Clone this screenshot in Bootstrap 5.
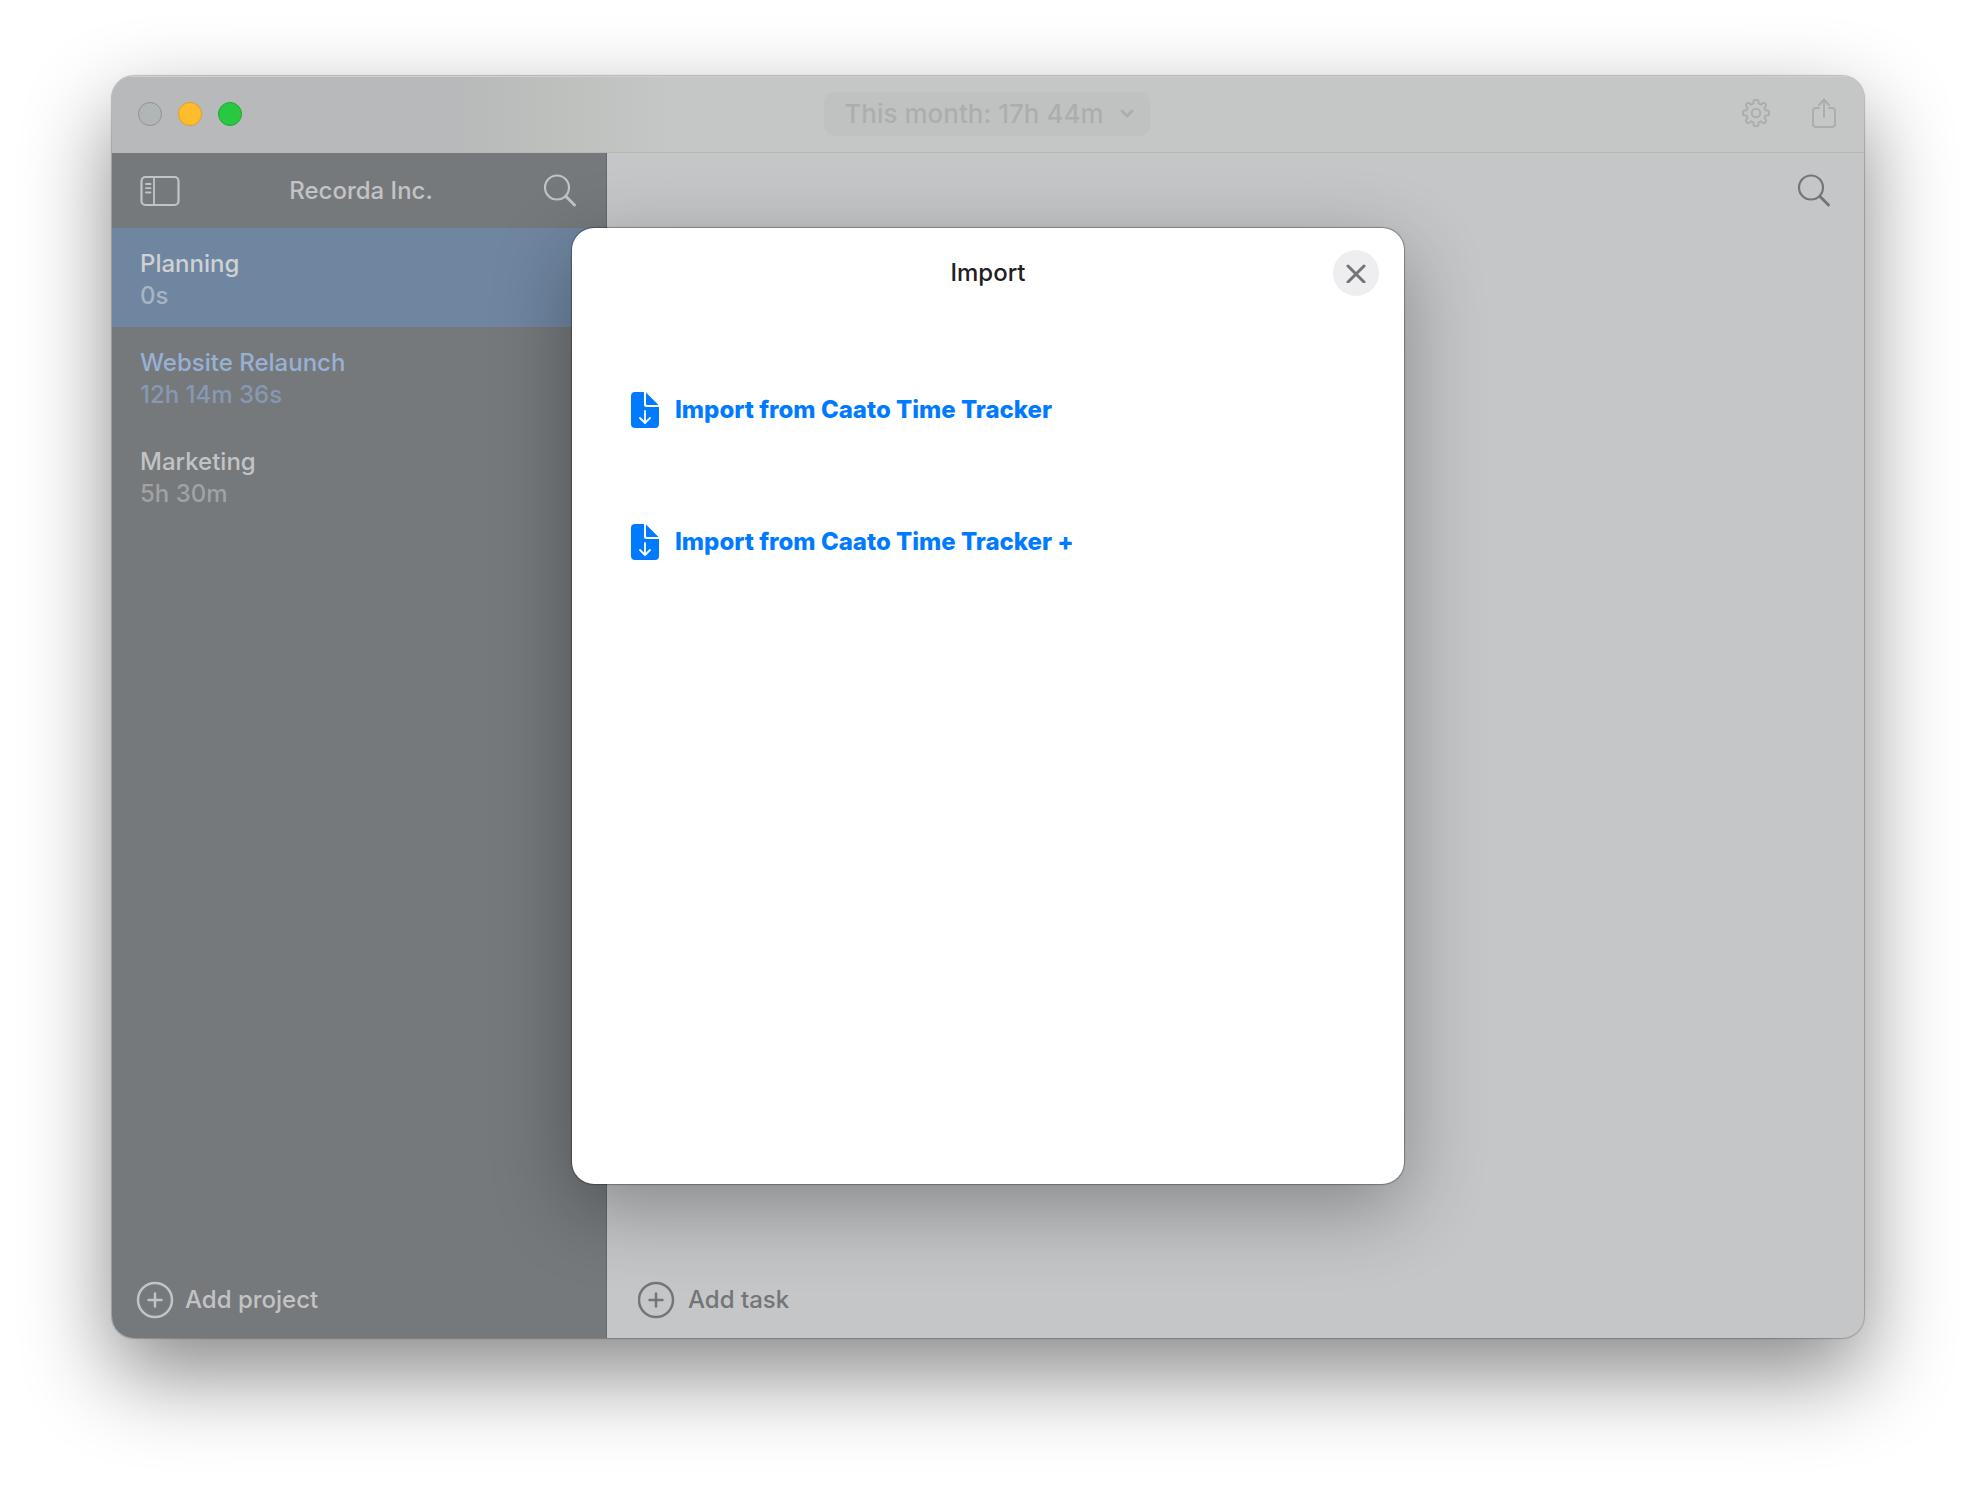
<!DOCTYPE html>
<html lang="en">
<head>
<meta charset="utf-8">
<meta name="viewport" content="width=device-width, initial-scale=1">
<title>Import</title>
<link href="https://cdn.jsdelivr.net/npm/bootstrap@5.3.0/dist/css/bootstrap.min.css" rel="stylesheet">
<style>
body{font-family:Inter,"Liberation Sans",sans-serif;font-size:24px;line-height:32px;font-weight:500;background:#fff;padding:76px 112px 148px}
button{color:inherit;font:inherit}
svg{display:block;fill:none;stroke:currentColor;stroke-linecap:round;stroke-linejoin:round;flex:none}
.app-window{border-radius:22px;background:#c5c6c8;box-shadow:0 0 1px 1px rgba(0,0,0,.22),0 36px 88px rgba(0,0,0,.47)}
.app-frame{border-radius:22px;overflow:hidden}
.title-bar{height:77px;background:linear-gradient(90deg,#b7b9ba 340px,#bdbfbd 430px,#c5c7c6 560px);border-bottom:1px solid #b5b8b6;box-shadow:inset 0 1px #cfd1d0;color:#acaead;padding:0 28px 0 26px}
.side-zone{flex:1 1 0}
.icon-btn{background:transparent;border:0;padding:0}
.traffic{width:24px;height:24px;border-radius:50%;border:1px solid #909495;background:#b0b5b6}
.traffic-min{background:#ffbd2e;border-color:#e0a020}
.traffic-max{background:#28c840;border-color:#1fa833}
.month-btn{background:#c0c2c1;border-radius:10px;height:44px;padding:0 16px 0 20px;font-size:26px}
.tool-icons{gap:42px;padding-bottom:3px}
.sidebar{width:495px;background:#75797c;color:#c2c3c5;border-right:1px solid #64686a}
.pane-head{height:75px}
.project{height:99px;padding:4px 28px 0;color:#c2c3c5;text-decoration:none}
.project-time{color:#a0a2a4}
.is-active{background:#6f86a1;color:#d0d1d3}
.is-active .project-time{color:#a9b4c2}
.is-running,.is-running .project-name{color:#98b0d4}
.is-running .project-time{color:#8798b2}
.add-bar{height:76px;padding:0 23px}
.add-btn{gap:10px}
.main-pane{color:#737577}
.sheet-layer{padding:152px 32px 154px;pointer-events:none}
.sheet{width:832px;background:#fff;border-radius:22px;color:#1f2022;pointer-events:auto;box-shadow:0 0 1px 1px rgba(0,0,0,.3),0 24px 80px rgba(0,0,0,.32)}
.sheet-head{height:89px;padding:0 25px}
.close-btn{width:46px;height:46px;border-radius:50%;background:#eeeef0;color:#747476}
.import-list{padding:69px 58px;gap:84px}
.import-link{color:#007aff;font-weight:800;height:48px}
</style>
</head>
<body class="min-vh-100 d-flex flex-column">
<div class="app-window position-relative flex-grow-1 d-flex flex-column">
  <div class="app-frame flex-grow-1 d-flex flex-column">
    <header class="title-bar d-flex align-items-center">
      <div class="side-zone d-flex gap-3">
        <button class="traffic p-0" aria-label="Close window"></button>
        <button class="traffic traffic-min p-0" aria-label="Minimize window"></button>
        <button class="traffic traffic-max p-0" aria-label="Zoom window"></button>
      </div>
      <button class="month-btn border-0 d-flex align-items-center gap-3">This month: 17h 44m
        <svg width="14" height="10" viewBox="0 0 14 10" stroke-width="3"><path d="M2 2l5 5 5-5"/></svg>
      </button>
      <div class="side-zone tool-icons d-flex justify-content-end align-items-center">
        <button class="icon-btn" aria-label="Settings">
          <svg width="28" height="28" viewBox="0 0 28 28" stroke-width="2"><circle cx="14" cy="14" r="4.300"/><path d="M11.500 4.500V2.500Q11.500 1 13 1H15Q16.500 1 16.500 2.500V4.500Q18 5 19 5.700L20.600 4.300Q21.700 3.300 22.700 4.300L23.700 5.300Q24.700 6.300 23.700 7.400L22.300 9Q23 10 23.500 11.500H25.500Q27 11.500 27 13V15Q27 16.500 25.500 16.500H23.500Q23 18 22.300 19L23.700 20.600Q24.700 21.700 23.700 22.700L22.700 23.700Q21.700 24.700 20.600 23.700L19 22.300Q18 23 16.500 23.500V25.500Q16.500 27 15 27H13Q11.500 27 11.500 25.500V23.500Q10 23 9 22.300L7.400 23.700Q6.300 24.700 5.300 23.700L4.300 22.700Q3.300 21.700 4.300 20.600L5.700 19Q5 18 4.500 16.500H2.500Q1 16.500 1 15V13Q1 11.500 2.500 11.500H4.500Q5 10 5.700 9L4.300 7.400Q3.300 6.300 4.300 5.300L5.300 4.300Q6.300 3.300 7.400 4.300L9 5.700Q10 5 11.500 4.500Z"/></svg>
        </button>
        <button class="icon-btn" aria-label="Share">
          <svg width="24" height="30" viewBox="0 0 24 30" stroke-width="2"><path d="M7 10H4a3 3 0 0 0-3 3v13a3 3 0 0 0 3 3h16a3 3 0 0 0 3-3V13a3 3 0 0 0-3-3h-3M12 19V2M7 7l5-5.500 5 5.500"/></svg>
        </button>
      </div>
    </header>
    <div class="d-flex flex-grow-1">
      <aside class="sidebar d-flex flex-column flex-shrink-0">
        <div class="pane-head d-flex align-items-center justify-content-between px-4">
          <button class="icon-btn ms-1" aria-label="Toggle sidebar">
            <svg width="40" height="32" viewBox="0 0 40 32" stroke-width="2.200"><rect x="1.500" y="2" width="37" height="28" rx="4"/><path d="M14 2v28M6 9h4.500M6 13.200h4.500M6 17.500h4.500" stroke-width="1.800"/></svg>
          </button>
          <span>Recorda Inc.</span>
          <button class="icon-btn me-1" aria-label="Search projects">
            <svg width="36" height="36" viewBox="0 0 36 36" stroke-width="2.200"><circle cx="15" cy="14.500" r="12"/><path d="M24 23.500l8.500 8.500" stroke-width="3"/></svg>
          </button>
        </div>
        <nav class="flex-grow-1">
          <a href="#" class="project is-active d-flex flex-column justify-content-center"><span class="project-name">Planning</span><span class="project-time">0s</span></a>
          <a href="#" class="project is-running d-flex flex-column justify-content-center"><span class="project-name">Website Relaunch</span><span class="project-time">12h 14m 36s</span></a>
          <a href="#" class="project d-flex flex-column justify-content-center"><span class="project-name">Marketing</span><span class="project-time">5h 30m</span></a>
        </nav>
        <div class="add-bar d-flex align-items-center">
          <button class="icon-btn add-btn d-flex align-items-center">
            <svg width="40" height="40" viewBox="0 0 40 40" stroke-width="2.500"><circle cx="20" cy="20" r="17"/><path d="M13.500 20h13M20 13.500v13"/></svg>Add project
          </button>
        </div>
      </aside>
      <main class="main-pane flex-grow-1 d-flex flex-column">
        <div class="pane-head d-flex align-items-center justify-content-end px-4">
          <button class="icon-btn me-2" aria-label="Search tasks">
            <svg width="36" height="36" viewBox="0 0 36 36" stroke-width="2.200"><circle cx="15" cy="14.500" r="12"/><path d="M24 23.500l8.500 8.500" stroke-width="3"/></svg>
          </button>
        </div>
        <div class="add-bar d-flex align-items-center mt-auto ms-2">
          <button class="icon-btn add-btn d-flex align-items-center">
            <svg width="40" height="40" viewBox="0 0 40 40" stroke-width="2.500"><circle cx="18" cy="20" r="17"/><path d="M11.500 20h13M18 13.500v13"/></svg>Add task
          </button>
        </div>
      </main>
    </div>
  </div>
  <div class="sheet-layer position-absolute top-0 start-0 w-100 h-100 d-flex justify-content-center">
    <section class="sheet" role="dialog" aria-labelledby="sheet-title">
      <div class="sheet-head d-flex align-items-center">
        <div class="side-zone"></div>
        <span id="sheet-title">Import</span>
        <div class="side-zone d-flex justify-content-end">
          <button class="close-btn border-0 p-0 d-flex align-items-center justify-content-center" aria-label="Close">
            <svg width="20" height="20" viewBox="0 0 20 20" stroke-width="3"><path d="M2 3l16 16M18 3L2 19"/></svg>
          </button>
        </div>
      </div>
      <div class="import-list d-flex flex-column align-items-start">
        <button class="import-link bg-transparent border-0 p-0 d-flex align-items-center gap-3">
          <svg width="29" height="36" viewBox="0 0 29 36"><path fill="currentColor" stroke="none" d="M5 0H14V12.500a2.500 2.500 0 0 0 2.500 2.500H29V32a4 4 0 0 1-4 4H5a4 4 0 0 1-4-4V4a4 4 0 0 1 4-4ZM16 0.500L28.500 13H17a1 1 0 0 1-1-1Z"/><path stroke="#fff" stroke-width="1.800" d="M15 19v11.500M10 26l5 5 5-5"/></svg>Import from Caato Time Tracker
        </button>
        <button class="import-link bg-transparent border-0 p-0 d-flex align-items-center gap-3">
          <svg width="29" height="36" viewBox="0 0 29 36"><path fill="currentColor" stroke="none" d="M5 0H14V12.500a2.500 2.500 0 0 0 2.500 2.500H29V32a4 4 0 0 1-4 4H5a4 4 0 0 1-4-4V4a4 4 0 0 1 4-4ZM16 0.500L28.500 13H17a1 1 0 0 1-1-1Z"/><path stroke="#fff" stroke-width="1.800" d="M15 19v11.500M10 26l5 5 5-5"/></svg>Import from Caato Time Tracker +
        </button>
      </div>
    </section>
  </div>
</div>
<script src="https://cdn.jsdelivr.net/npm/bootstrap@5.3.0/dist/js/bootstrap.bundle.min.js"></script>
</body>
</html>
